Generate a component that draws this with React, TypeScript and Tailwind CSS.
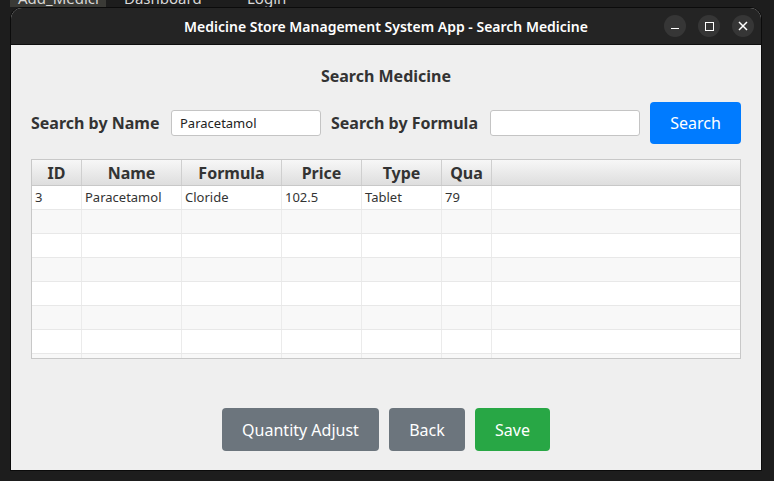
import React from 'react';

const columns = ['ID', 'Name', 'Formula', 'Price', 'Type', 'Qua', ''];

const rows: string[][] = [
  ['3', 'Paracetamol', 'Cloride', '102.5', 'Tablet', '79', ''],
  ['', '', '', '', '', '', ''],
  ['', '', '', '', '', '', ''],
  ['', '', '', '', '', '', ''],
  ['', '', '', '', '', '', ''],
  ['', '', '', '', '', '', ''],
  ['', '', '', '', '', '', ''],
  ['', '', '', '', '', '', ''],
];

const gridCols = 'grid grid-cols-[50px_100px_100px_80px_80px_50px_1fr]';

const App: React.FC = () => {
  return (
    <div
      className="relative w-[774px] h-[481px] overflow-hidden bg-[#1d1d1d]"
      style={{ fontFamily: '"Noto Sans", "Open Sans", sans-serif' }}
    >
      {/* other windows behind, only the bottom of their tabs shows */}
      <div className="absolute left-0 top-[-11px] flex h-[18px] items-center text-[15px] text-[#d8d8d8]">
        <div className="ml-[10px] flex h-full w-[96px] items-center bg-[#3a3a36] pl-[8px]">Add_Medici</div>
        <div className="ml-[18px] w-[112px]">Dashboard</div>
        <div className="ml-[11px]">Login</div>
      </div>

      {/* main window */}
      <div className="relative ml-[11px] mt-[8px] flex h-[462px] w-[750px] flex-col overflow-hidden rounded-t-[11px] bg-[#efefef] shadow-[0_0_0_1px_#0b0b0b]">
        <div className="relative flex h-[37px] shrink-0 items-center justify-center border-b border-[#0e0e0e] bg-[#242424]">
          <span className="text-[14px] font-semibold text-white">
            Medicine Store Management System App - Search Medicine
          </span>
          <div className="absolute right-[7px] top-[7px] flex gap-[12px]">
            <div className="flex h-[22px] w-[22px] items-center justify-center rounded-full bg-[#363636]">
              <div className="mt-[5px] h-[1.5px] w-[8px] bg-white" />
            </div>
            <div className="flex h-[22px] w-[22px] items-center justify-center rounded-full bg-[#363636]">
              <div className="h-[9px] w-[9px] border-[1.5px] border-white" />
            </div>
            <div className="flex h-[22px] w-[22px] items-center justify-center rounded-full bg-[#363636]">
              <svg width="10" height="10" viewBox="0 0 10 10">
                <path d="M1 1 L9 9 M9 1 L1 9" stroke="white" strokeWidth="1.5" />
              </svg>
            </div>
          </div>
        </div>

        <div className="flex flex-1 flex-col px-[20px]">
          <h1 className="mt-[20px] text-center text-[16px] font-bold leading-[22px] text-[#333]">Search Medicine</h1>

          <div className="mt-[15px] flex h-[42px] items-center text-[16px] font-bold text-[#333]">
            <span className="w-[129px] whitespace-nowrap">Search by Name</span>
            <input
              className="ml-[11px] h-[26px] w-[150px] rounded-[3px] border border-[#c4c4c4] bg-white px-[8px] text-[13px] font-normal text-[#222] outline-none"
              defaultValue="Paracetamol"
            />
            <span className="ml-[10px] w-[148px] whitespace-nowrap">Search by Formula</span>
            <input className="ml-[11px] h-[26px] w-[150px] rounded-[3px] border border-[#c4c4c4] bg-white px-[8px] text-[13px] font-normal outline-none" />
            <button className="ml-[10px] h-[42px] w-[91px] rounded-[4px] bg-[#007bff] text-[16px] font-normal text-white">
              Search
            </button>
          </div>

          <div className="mt-[15px] h-[200px] overflow-hidden border border-[#c8c8c8] bg-white">
            <div className={`${gridCols} h-[26px] border-b border-[#c8c8c8] bg-gradient-to-b from-[#f7f7f7] to-[#dedede]`}>
              {columns.map((col, i) => (
                <div
                  key={i}
                  className="flex items-center justify-center border-r border-[#cfcfcf] text-[16px] font-bold text-[#333] last:border-r-0"
                >
                  {col}
                </div>
              ))}
            </div>
            {rows.map((row, r) => (
              <div
                key={r}
                className={`${gridCols} h-[24px] border-b border-[#e8e8e8] ${r % 2 === 1 ? 'bg-[#f8f8f8]' : 'bg-white'}`}
              >
                {row.map((cell, c) => (
                  <div
                    key={c}
                    className="flex items-center border-r border-[#ebebeb] pl-[3px] text-[13px] text-[#333] last:border-r-0"
                  >
                    {cell}
                  </div>
                ))}
              </div>
            ))}
          </div>

          <div className="mt-[49px] flex justify-center gap-[10px] text-[16px] text-white">
            <button className="h-[43px] w-[157px] rounded-[4px] bg-[#6c757d]">Quantity Adjust</button>
            <button className="h-[43px] w-[76px] rounded-[4px] bg-[#6c757d]">Back</button>
            <button className="h-[43px] w-[75px] rounded-[4px] bg-[#28a745]">Save</button>
          </div>
        </div>
      </div>
    </div>
  );
};

export default App;
